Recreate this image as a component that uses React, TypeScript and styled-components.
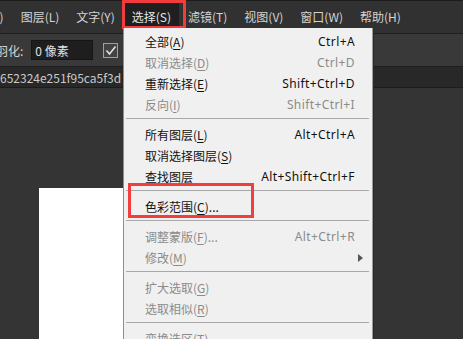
import styled, { createGlobalStyle, css } from "styled-components";

const GlobalStyle = createGlobalStyle`
  html, body {
    margin: 0;
    padding: 0;
    background: #343434;
  }
  * {
    box-sizing: border-box;
  }
`;

const FONT = `"Noto Sans CJK SC", "Noto Sans", sans-serif`;

const Screen = styled.div`
  position: relative;
  width: 463px;
  height: 339px;
  overflow: hidden;
  display: flex;
  flex-direction: column;
  font-family: ${FONT};
  font-size: 12px;
  background: #343434;
`;

// 顶部菜单栏
const MenuBar = styled.div`
  height: 34px;
  flex-shrink: 0;
  display: flex;
  align-items: stretch;
  gap: 1px;
  margin-left: -40px;
  padding: 1px 0 1px;
  border-top: 1px solid #1c1c1c;
  border-bottom: 1px solid #1e1e1e;
  background: #313131;
`;

const TopItem = styled.div<{ $active?: boolean }>`
  position: relative;
  display: flex;
  align-items: center;
  padding: 0 8px 2px;
  color: #d4d4d4;
  white-space: nowrap;

  ${(p) =>
    p.$active &&
    css`
      background: #1f1f1f;
      border-radius: 2px;
      color: #e6e6e6;
      &::after {
        content: "";
        position: absolute;
        top: -2px;
        left: -2px;
        right: -7px;
        bottom: 3px;
        border: 3px solid #f03c3c;
      }
    `}
`;

// 选项栏
const OptionsBar = styled.div`
  height: 33px;
  flex-shrink: 0;
  display: flex;
  align-items: center;
  gap: 8px;
  margin-left: -4px;
  border-bottom: 1px solid #1e1e1e;
  background: #393939;
  color: #d4d4d4;
  white-space: nowrap;
`;

const Field = styled.div`
  width: 62px;
  height: 20px;
  display: flex;
  align-items: center;
  padding-left: 3px;
  background: #1e1e1e;
  border: 1px solid #161616;
  color: #e2e2e2;
`;

const CheckBox = styled.div`
  width: 15px;
  height: 15px;
  margin-left: 2px;
  display: flex;
  align-items: center;
  justify-content: center;
  background: #434343;
  border: 1px solid #a0a0a0;
`;

// 文档标签栏
const TabBar = styled.div`
  height: 21px;
  flex-shrink: 0;
  display: flex;
  align-items: center;
  border-bottom: 1px solid #1c1c1c;
  background: #282828;
  color: #c9c9c9;
  white-space: nowrap;
  overflow: hidden;
`;

const Workspace = styled.div`
  height: 251px;
  flex-shrink: 0;
  padding-left: 39px;
  background: #343434;
`;

const Document = styled.div`
  width: 320px;
  height: 151px;
  margin-top: 100px;
  background: #ffffff;
`;

// 下拉菜单
const Dropdown = styled.div`
  position: absolute;
  left: 123px;
  top: 28px;
  width: 250px;
  padding-top: 3px;
  background: #f0f0f0;
  border-left: 1px solid #8d8d8d;
  border-right: 1px solid #9c9c9c;
  box-shadow: 1px 0 0 #2a2a2a;
  z-index: 10;
`;

const Row = styled.div<{ $disabled?: boolean }>`
  height: 21px;
  display: flex;
  align-items: center;
  justify-content: space-between;
  padding: 0 17px 0 21px;
  color: ${(p) => (p.$disabled ? "#8b8b8b" : "#111111")};
  white-space: nowrap;

  u {
    text-decoration-thickness: 1px;
    text-underline-offset: 2px;
  }
`;

const Shortcut = styled.span`
  font-family: "Noto Sans", "Open Sans", sans-serif;
  letter-spacing: 0.4px;
`;

const SubArrow = styled.span`
  width: 0;
  height: 0;
  margin-right: -8px;
  border-top: 4px solid transparent;
  border-bottom: 4px solid transparent;
  border-left: 5px solid #555555;
`;

const Separator = styled.div`
  height: 9px;
  margin: 0 3px 0 2px;
  padding-top: 3px;

  &::before {
    content: "";
    display: block;
    border-top: 1px solid #a8a8a8;
  }
`;

const Callout = styled.div`
  position: absolute;
  left: 4px;
  top: 155px;
  width: 126px;
  height: 35px;
  border: 3px solid #f23e3e;
  pointer-events: none;
`;

type Item =
  | { sep: true }
  | { label: string; key: string; tail?: string; shortcut?: string; disabled?: boolean; sub?: boolean };

const items: Item[] = [
  { label: "全部", key: "A", shortcut: "Ctrl+A" },
  { label: "取消选择", key: "D", shortcut: "Ctrl+D", disabled: true },
  { label: "重新选择", key: "E", shortcut: "Shift+Ctrl+D" },
  { label: "反向", key: "I", shortcut: "Shift+Ctrl+I", disabled: true },
  { sep: true },
  { label: "所有图层", key: "L", shortcut: "Alt+Ctrl+A" },
  { label: "取消选择图层", key: "S" },
  { label: "查找图层", key: "", shortcut: "Alt+Shift+Ctrl+F" },
  { sep: true },
  { label: "色彩范围", key: "C", tail: "..." },
  { sep: true },
  { label: "调整蒙版", key: "F", tail: "...", shortcut: "Alt+Ctrl+R", disabled: true },
  { label: "修改", key: "M", sub: true, disabled: true },
  { sep: true },
  { label: "扩大选取", key: "G", disabled: true },
  { label: "选取相似", key: "R", disabled: true },
  { sep: true },
  { label: "变换选区", key: "T", disabled: true },
];

const menus = ["图像(I)", "图层(L)", "文字(Y)", "选择(S)", "滤镜(T)", "视图(V)", "窗口(W)", "帮助(H)"];

export default function App() {
  return (
    <>
      <GlobalStyle />
      <Screen>
        <MenuBar>
          {menus.map((m) => (
            <TopItem key={m} $active={m === "选择(S)"}>
              {m}
            </TopItem>
          ))}
        </MenuBar>

        <OptionsBar>
          <span>羽化:</span>
          <Field>0 像素</Field>
          <CheckBox>
            <svg width="12" height="11" viewBox="0 0 12 11">
              <path d="M1.5 5.5 L4.5 9 L10.5 1.5" fill="none" stroke="#e0e0e0" strokeWidth="1.6" />
            </svg>
          </CheckBox>
          <span>消</span>
        </OptionsBar>

        <TabBar>652324e251f95ca5f3d</TabBar>

        <Workspace>
          <Document />
        </Workspace>

        <Dropdown>
          {items.map((it, i) =>
            "sep" in it ? (
              <Separator key={i} />
            ) : (
              <Row key={i} $disabled={it.disabled}>
                <span>
                  {it.label}
                  {it.key && (
                    <>
                      (<u>{it.key}</u>)
                    </>
                  )}
                  {it.tail}
                </span>
                {it.shortcut && <Shortcut>{it.shortcut}</Shortcut>}
                {it.sub && <SubArrow />}
              </Row>
            )
          )}
          <Callout />
        </Dropdown>
      </Screen>
    </>
  );
}
